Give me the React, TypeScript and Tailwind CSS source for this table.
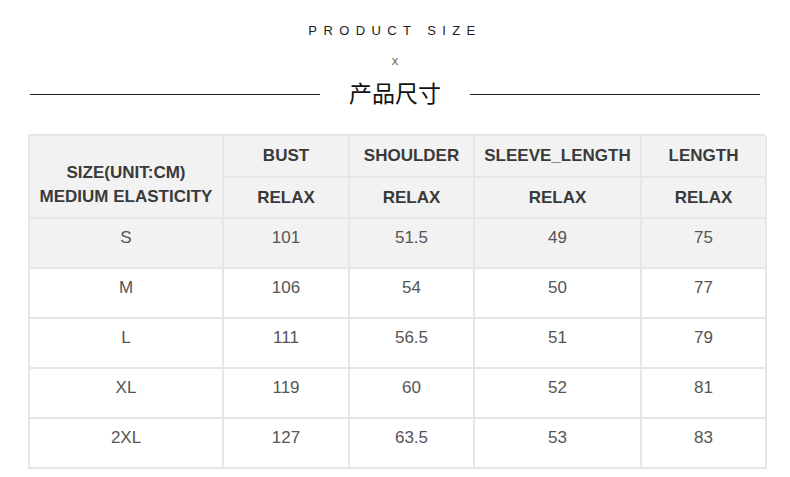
const cols = ["BUST", "SHOULDER", "SLEEVE_LENGTH", "LENGTH"];

const rows = [
  ["S", "101", "51.5", "49", "75"],
  ["M", "106", "54", "50", "77"],
  ["L", "111", "56.5", "51", "79"],
  ["XL", "119", "60", "52", "81"],
  ["2XL", "127", "63.5", "53", "83"],
];

export default function App() {
  return (
    <div
      className="w-[790px] h-[477px] bg-white overflow-hidden text-[#333]"
      style={{ fontFamily: '"Liberation Sans", Arial, "Noto Sans CJK SC", sans-serif' }}
    >
      {/* Title */}
      <div className="flex flex-col items-center pt-[23px]">
        <div className="text-[13px] leading-[15px] tracking-[6.4px] text-[#222] pl-[6px] -ml-[6px]">
          PRODUCT SIZE
        </div>
        <div className="mt-[17px] text-[13px] leading-[12px] text-[#666]">x</div>
        <div className="w-full flex items-center mt-[13px] px-[30px]">
          <div className="flex-1 h-px bg-[#222]" />
          <div className="w-[150px] text-center text-[23px] leading-[28px] text-[#111]">产品尺寸</div>
          <div className="flex-1 h-px bg-[#222]" />
        </div>
      </div>

      {/* Table */}
      <div className="mt-[26px] ml-[28px] w-[737px] grid grid-cols-[194px_126px_125px_167px_125px] grid-rows-[42px_41px_50px_50px_50px_50px_50px] border-l-2 border-t-2 border-[#e6e6e6]">
        <div className="row-span-2 bg-[#f2f2f2] border-r-2 border-b-2 border-[#e6e6e6] flex flex-col items-center justify-center pt-[16px] text-[17px] leading-[24px] font-bold text-[#3a3a3a]">
          <span>SIZE(UNIT:CM)</span>
          <span>MEDIUM ELASTICITY</span>
        </div>
        {cols.map((c) => (
          <div
            key={c}
            className="bg-[#f2f2f2] border-r-2 border-b-2 border-[#e6e6e6] flex items-center justify-center text-[17px] font-bold text-[#3a3a3a]"
          >
            {c}
          </div>
        ))}
        {cols.map((c) => (
          <div
            key={c + "-relax"}
            className="bg-[#f2f2f2] border-r-2 border-b-2 border-[#e6e6e6] flex items-center justify-center text-[17px] font-bold text-[#3a3a3a]"
          >
            RELAX
          </div>
        ))}
        {rows.map((r, i) =>
          r.map((v, j) => (
            <div
              key={i + "-" + j}
              className={
                "border-r-2 border-b-2 border-[#e6e6e6] flex items-center justify-center pb-[10px] text-[17px] text-[#555] " +
                (i === 0 ? "bg-[#f2f2f2]" : "bg-white")
              }
            >
              {v}
            </div>
          ))
        )}
      </div>
    </div>
  );
}
